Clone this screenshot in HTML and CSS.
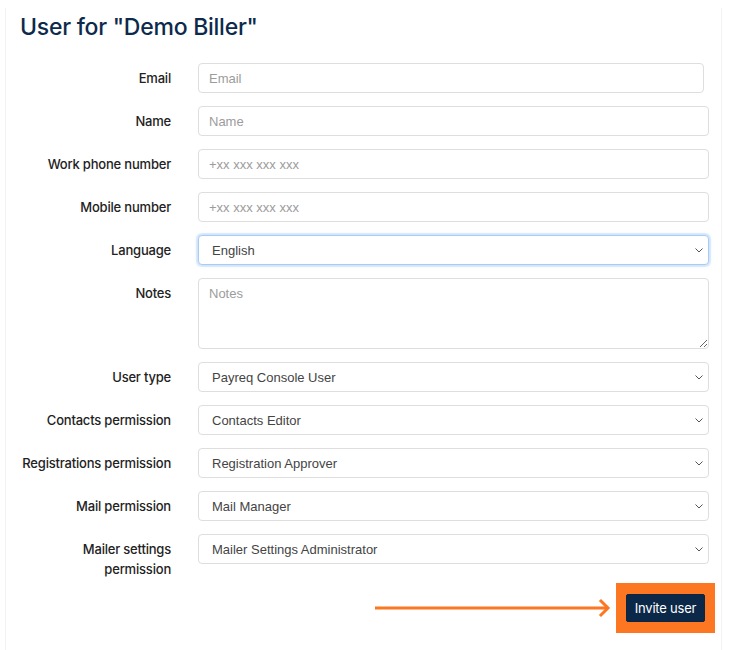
FILE: index.html
```html
<!DOCTYPE html>
<html lang="en">
<head>
<meta charset="utf-8">
<title>User for "Demo Biller"</title>
<link rel="stylesheet" href="styles.css">
</head>
<body>
<main class="panel">
  <h1 class="title">User for "Demo Biller"</h1>
  <form class="user-form">
    <label class="field-label" for="email">Email</label>
    <input class="control control--short" id="email" type="email" placeholder="Email">

    <label class="field-label" for="name">Name</label>
    <input class="control" id="name" type="text" placeholder="Name">

    <label class="field-label" for="work-phone">Work phone number</label>
    <input class="control" id="work-phone" type="tel" placeholder="+xx xxx xxx xxx">

    <label class="field-label" for="mobile">Mobile number</label>
    <input class="control" id="mobile" type="tel" placeholder="+xx xxx xxx xxx">

    <label class="field-label" for="language">Language</label>
    <select class="control control--select is-focused" id="language">
      <option>English</option>
    </select>

    <label class="field-label" for="notes">Notes</label>
    <textarea class="control control--area" id="notes" placeholder="Notes"></textarea>

    <label class="field-label" for="user-type">User type</label>
    <select class="control control--select" id="user-type">
      <option>Payreq Console User</option>
    </select>

    <label class="field-label" for="contacts">Contacts permission</label>
    <select class="control control--select" id="contacts">
      <option>Contacts Editor</option>
    </select>

    <label class="field-label" for="registrations">Registrations permission</label>
    <select class="control control--select" id="registrations">
      <option>Registration Approver</option>
    </select>

    <label class="field-label" for="mail">Mail permission</label>
    <select class="control control--select" id="mail">
      <option>Mail Manager</option>
    </select>

    <label class="field-label" for="mailer">Mailer settings permission</label>
    <select class="control control--select" id="mailer">
      <option>Mailer Settings Administrator</option>
    </select>

    <div class="actions">
      <svg class="pointer" width="239" height="20" viewBox="0 0 239 20" aria-hidden="true">
        <line x1="0" y1="10" x2="233" y2="10" stroke="#fd7722" stroke-width="3"/>
        <polyline points="226,3 233,10 226,17" fill="none" stroke="#fd7722" stroke-width="3" stroke-linecap="square"/>
      </svg>
      <div class="highlight">
        <button class="btn-primary" type="button">Invite user</button>
      </div>
    </div>
  </form>
</main>
</body>
</html>
```
FILE: styles.css
```css
html, body {
  margin: 0;
  padding: 0;
  background: #ffffff;
}

body {
  font-family: Inter, "Liberation Sans", sans-serif;
  color: #1f1f1f;
}

.panel {
  box-sizing: border-box;
  width: 717px;
  margin: 8px 0 0 5px;
  padding: 4px 12px 20px 14px;
  border-left: 1px solid #f2f2f2;
  border-right: 1px solid #f2f2f2;
  min-height: 642px;
}

.title {
  margin: 0 0 21px 0;
  font-size: 23px;
  line-height: 30px;
  font-weight: 500;
  color: #0d2a4c;
  letter-spacing: -0.25px;
}

.user-form {
  display: grid;
  grid-template-columns: 151px 1fr;
  column-gap: 27px;
  row-gap: 13px;
  align-items: start;
}

.field-label {
  text-align: right;
  font-size: 13px;
  line-height: 20px;
  padding-top: 5px;
  font-weight: 500;
  letter-spacing: -0.2px;
  color: #222222;
}

.control {
  box-sizing: border-box;
  width: 100%;
  height: 30px;
  margin: 0;
  padding: 0 10px;
  border: 1px solid #dedede;
  border-radius: 4px;
  background-color: #ffffff;
  font-family: "Liberation Sans", Arial, sans-serif;
  font-size: 13px;
  color: #444444;
  outline: none;
}

.control::placeholder {
  color: #9c9c9c;
}

.control--short {
  width: calc(100% - 5px);
}

/* custom chevron instead of the native menulist arrow */
.control--select {
  appearance: none;
  -webkit-appearance: none;
  padding-left: 13px;
  padding-right: 24px;
  color: #444444;
  background-image: url("data:image/svg+xml,%3Csvg xmlns='http://www.w3.org/2000/svg' width='8' height='5' viewBox='0 0 8 5'%3E%3Cpolyline points='0.5,0.5 4,4 7.5,0.5' fill='none' stroke='%23555' stroke-width='1'/%3E%3C/svg%3E");
  background-repeat: no-repeat;
  background-position: right 5px center;
  background-size: 8px 5px;
}

.control--area {
  height: 71px;
  padding-top: 7px;
  resize: vertical;
}

.is-focused {
  border-color: #a8cdf5;
  box-shadow: 0 0 0 2px rgba(80, 150, 230, 0.15), 0 0 4px rgba(80, 150, 230, 0.25);
}

.actions {
  grid-column: 1 / -1;
  display: flex;
  justify-content: flex-end;
  align-items: center;
  margin-top: -9px;
  margin-right: -6px;
}

.pointer {
  display: block;
  margin-right: 2px;
}

.highlight {
  background: #fd7722;
  padding: 11px 10px;
}

.btn-primary {
  display: block;
  box-sizing: border-box;
  width: 79px;
  height: 28px;
  padding: 0;
  border: 1px solid #0a2646;
  border-radius: 2px;
  background: #0b2849;
  color: #ffffff;
  font-family: Inter, "Liberation Sans", sans-serif;
  font-size: 13px;
  font-weight: 400;
  letter-spacing: -0.2px;
  cursor: pointer;
}
```
